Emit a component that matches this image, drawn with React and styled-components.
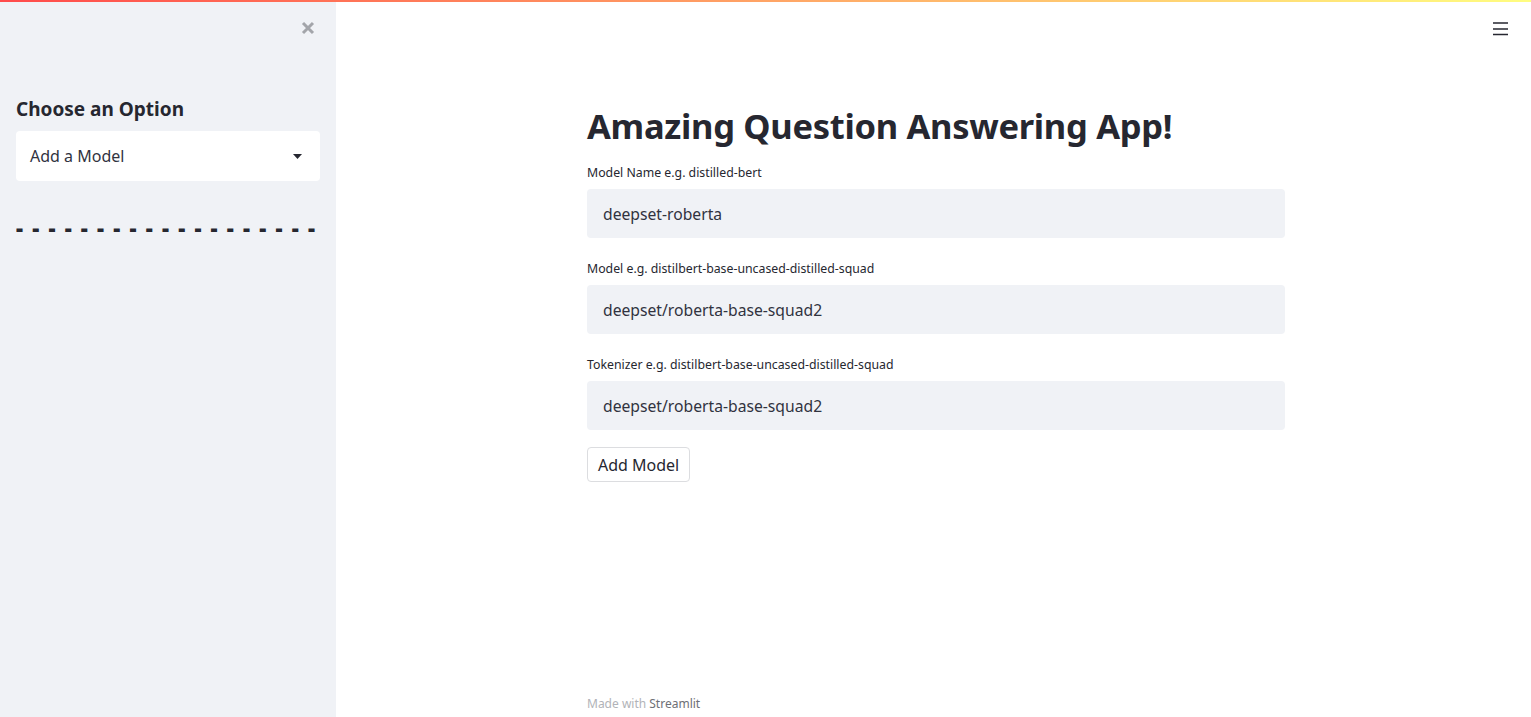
import styled, { createGlobalStyle } from 'styled-components'

const GlobalStyle = createGlobalStyle`
  html, body {
    margin: 0;
    padding: 0;
    background: #ffffff;
    font-family: "Noto Sans", "Open Sans", sans-serif;
    color: #262730;
  }
  * { box-sizing: border-box; }
`

const Decoration = styled.div`
  position: fixed;
  top: 0;
  left: 0;
  right: 0;
  height: 2px;
  background: linear-gradient(90deg, rgb(255, 75, 75), rgb(255, 253, 128));
  z-index: 10;
`

const Page = styled.div`
  display: flex;
  height: 717px;
  overflow: hidden;
`

const Sidebar = styled.aside`
  width: 336px;
  flex: 0 0 336px;
  background: #f0f2f6;
  padding: 0 16px;
  display: flex;
  flex-direction: column;
`

const SidebarHeader = styled.div`
  height: 97px;
  display: flex;
  justify-content: flex-end;
  align-items: flex-start;
  padding-top: 21px;
  padding-right: 5px;
`

const IconButton = styled.button`
  border: none;
  background: none;
  padding: 0;
  display: flex;
  cursor: pointer;
`

const SideTitle = styled.h3`
  margin: 0 0 10px;
  font-size: 19px;
  line-height: 24px;
  font-weight: 700;
  color: #262730;
`

const SelectBox = styled.div`
  height: 50px;
  background: #ffffff;
  border-radius: 4px;
  display: flex;
  align-items: center;
  justify-content: space-between;
  padding: 0 18px 0 14px;
  font-size: 16px;
  color: #31333f;
`

const Dashes = styled.div`
  margin-top: 32px;
  font-size: 22px;
  font-weight: 900;
  letter-spacing: 1.75px;
  line-height: 28px;
  color: #262730;
  white-space: nowrap;
  overflow: hidden;
`

const Main = styled.main`
  flex: 1;
  display: flex;
  flex-direction: column;
  padding-left: 5px;
`

const TopBar = styled.div`
  height: 104px;
  display: flex;
  justify-content: flex-end;
  align-items: flex-start;
  padding-top: 22px;
  padding-right: 23px;
`

const Block = styled.div`
  width: 698px;
  margin: 0 auto;
  display: flex;
  flex-direction: column;
  flex: 1;
`

const Title = styled.h1`
  margin: 0 0 16px;
  font-size: 34.5px;
  line-height: 44px;
  font-weight: 700;
  color: #262730;
  letter-spacing: -0.3px;
`

const Field = styled.div`
  display: flex;
  flex-direction: column;
  gap: 7px;
  margin-bottom: 22px;
`

const Label = styled.label`
  font-size: 12.3px;
  line-height: 18px;
  color: #262730;
`

const Input = styled.input`
  height: 49px;
  border: none;
  outline: none;
  border-radius: 4px;
  background: #f0f2f6;
  padding: 0 16px;
  font-family: inherit;
  font-size: 15.7px;
  color: #31333f;
`

const Button = styled.button`
  align-self: flex-start;
  margin-top: -5px;
  height: 35px;
  padding: 0 10px;
  background: #ffffff;
  border: 1px solid #dcdde0;
  border-radius: 4px;
  font-family: inherit;
  font-size: 16px;
  color: #262730;
`

const Footer = styled.footer`
  margin-top: auto;
  padding-bottom: 5px;
  font-size: 12px;
  line-height: 16px;
  color: #b1b3b8;

  span {
    color: #6e7076;
  }
`

function CloseIcon() {
  return (
    <svg width="14" height="14" viewBox="0 0 14 14">
      <path d="M2 2 L12 12 M12 2 L2 12" stroke="#a3a5aa" strokeWidth="3" strokeLinecap="butt" />
    </svg>
  )
}

function MenuIcon() {
  return (
    <svg width="15" height="14" viewBox="0 0 15 14">
      <path d="M0 1 H15 M0 7 H15 M0 12.5 H15" stroke="#262730" strokeWidth="1.6" />
    </svg>
  )
}

function Caret() {
  return (
    <svg width="9" height="5" viewBox="0 0 9 5">
      <path d="M0 0 H9 L4.5 5 Z" fill="#262730" />
    </svg>
  )
}

const fields = [
  { label: 'Model Name e.g. distilled-bert', value: 'deepset-roberta' },
  { label: 'Model e.g. distilbert-base-uncased-distilled-squad', value: 'deepset/roberta-base-squad2' },
  { label: 'Tokenizer e.g. distilbert-base-uncased-distilled-squad', value: 'deepset/roberta-base-squad2' },
]

export default function App() {
  return (
    <>
      <GlobalStyle />
      <Decoration />
      <Page>
        <Sidebar>
          <SidebarHeader>
            <IconButton><CloseIcon /></IconButton>
          </SidebarHeader>
          <SideTitle>Choose an Option</SideTitle>
          <SelectBox>
            Add a Model
            <Caret />
          </SelectBox>
          <Dashes>{Array(19).fill('-').join(' ')}</Dashes>
        </Sidebar>
        <Main>
          <TopBar>
            <IconButton><MenuIcon /></IconButton>
          </TopBar>
          <Block>
            <Title>Amazing Question Answering App!</Title>
            {fields.map((f, i) => (
              <Field key={i}>
                <Label>{f.label}</Label>
                <Input defaultValue={f.value} />
              </Field>
            ))}
            <Button>Add Model</Button>
            <Footer>Made with <span>Streamlit</span></Footer>
          </Block>
        </Main>
      </Page>
    </>
  )
}
